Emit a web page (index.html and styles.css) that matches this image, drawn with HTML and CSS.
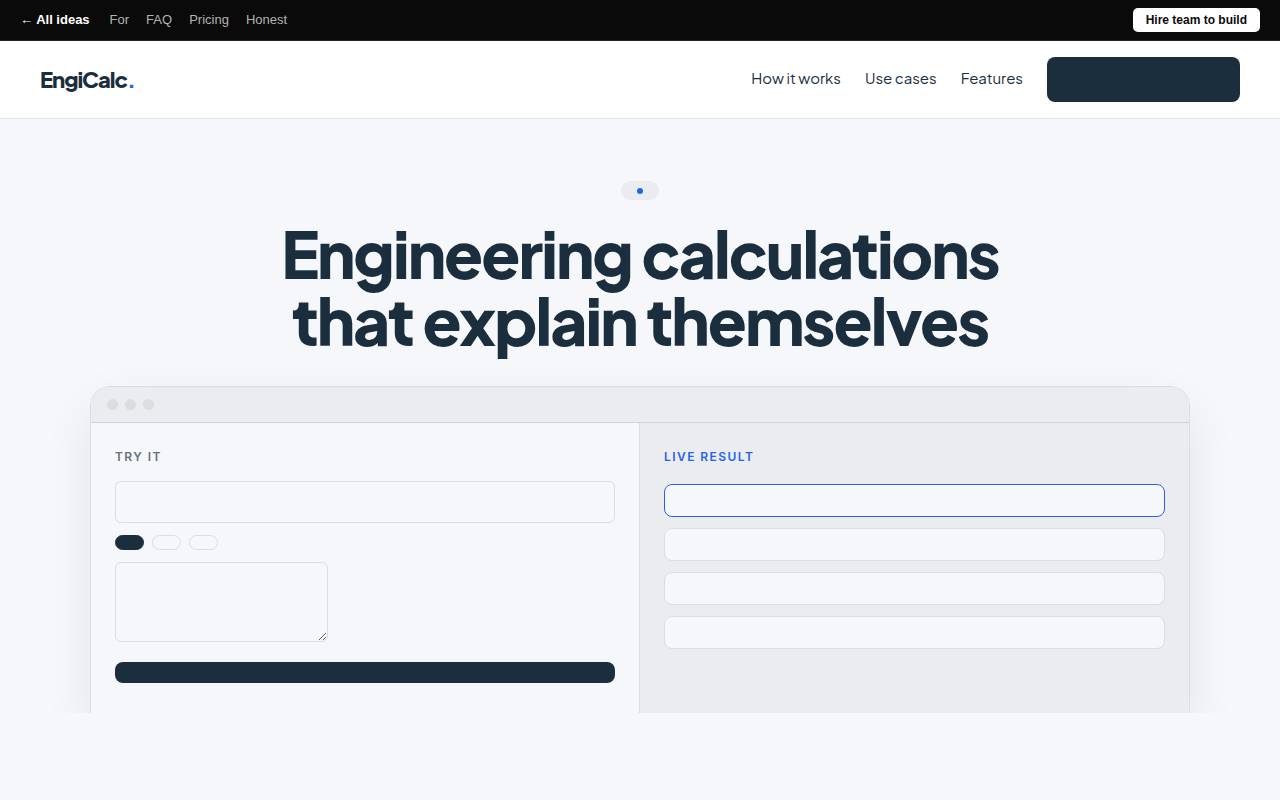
FILE: index.html
```html
<!DOCTYPE html>
<html lang="en">
<head>
  <meta charset="UTF-8">
  <meta name="viewport" content="width=device-width, initial-scale=1.0">
  <title>EngiCalc</title>
  <link rel="stylesheet" href="styles.css">
</head>
<body>
  <!-- Ideas bar -->
  <div class="topbar">
    <nav class="topbar-links">
      <a href="#ideas" class="topbar-back">← All ideas</a>
      <a href="#for">For</a>
      <a href="#faq">FAQ</a>
      <a href="#pricing">Pricing</a>
      <a href="#honest">Honest</a>
    </nav>
    <a href="#hire" class="topbar-cta">Hire team to build</a>
  </div>

  <!-- Site header -->
  <header class="header">
    <a href="#" class="logo">EngiCalc<span class="logo-dot">.</span></a>
    <nav class="nav">
      <a href="#how">How it works</a>
      <a href="#use-cases">Use cases</a>
      <a href="#features">Features</a>
      <button class="nav-button" type="button" aria-label="Get started"></button>
    </nav>
  </header>

  <main class="hero">
    <div class="badge"><span class="badge-dot"></span></div>
    <h1>Engineering calculations<br>that explain themselves</h1>

    <!-- Product preview -->
    <div class="window">
      <div class="window-bar">
        <span class="window-dot"></span>
        <span class="window-dot"></span>
        <span class="window-dot"></span>
      </div>
      <div class="window-body">
        <form class="pane">
          <label class="pane-title" for="problem">TRY IT</label>
          <input class="field" type="text" id="problem">
          <div class="chips">
            <button class="chip chip-active" type="button" aria-label="First example"></button>
            <button class="chip" type="button" aria-label="Second example"></button>
            <button class="chip" type="button" aria-label="Third example"></button>
          </div>
          <textarea class="notes" aria-label="Notes"></textarea>
          <button class="run-button" type="button" aria-label="Calculate"></button>
        </form>
        <div class="pane pane-result">
          <h2 class="pane-title pane-title-live">LIVE RESULT</h2>
          <div class="results">
            <div class="result result-active"></div>
            <div class="result"></div>
            <div class="result"></div>
            <div class="result"></div>
          </div>
        </div>
      </div>
    </div>
  </main>
</body>
</html>
```
FILE: styles.css
```css
* {
  box-sizing: border-box;
}

body {
  margin: 0;
  font-family: "Plus Jakarta Sans", Inter, sans-serif;
  background-color: #f6f7fb;
  color: #1b2e3d;
}

a {
  color: inherit;
  text-decoration: none;
}

button {
  border: none;
  padding: 0;
  cursor: pointer;
}

/* Ideas bar */
.topbar {
  display: flex;
  justify-content: space-between;
  align-items: center;
  padding: 8px 20px;
  background-color: #0a0a0a;
  border-bottom: 1px solid #222222;
  font-family: "Liberation Sans", Arial, sans-serif;
  font-size: 13px;
  line-height: 16px;
}

.topbar-links {
  display: flex;
  gap: 17px;
  color: #b3b3b3;
}

.topbar-back {
  margin-right: 3px;
  color: #ffffff;
  font-weight: bold;
}

.topbar-cta {
  padding: 4px 13px;
  border-radius: 5px;
  background-color: #ffffff;
  color: #0a0a0a;
  font-size: 12px;
  font-weight: bold;
}

/* Header */
.header {
  display: flex;
  justify-content: space-between;
  align-items: center;
  padding: 16px 40px;
  background-color: #ffffff;
  border-bottom: 1px solid #e2e4e6;
}

.logo {
  padding-bottom: 2px;
  font-size: 22px;
  font-weight: 800;
  letter-spacing: -1px;
}

.logo-dot {
  color: #2563eb;
}

.nav {
  display: flex;
  align-items: center;
  gap: 24px;
  font-size: 15px;
}

.nav a {
  padding-bottom: 4px;
}

.nav-button {
  width: 193px;
  height: 45px;
  border-radius: 8px;
  background-color: #1b2e3d;
}

/* Hero */
.hero {
  display: flex;
  flex-direction: column;
  align-items: center;
  padding: 62px 40px 0;
  overflow: hidden;
}

.badge {
  display: flex;
  padding: 7px 16px 6px;
  border-radius: 10px;
  background-color: #ebecf0;
}

.badge-dot {
  width: 6px;
  height: 6px;
  border-radius: 50%;
  background-color: #2563eb;
}

h1 {
  margin: 20px 0 32px;
  font-size: 64px;
  font-weight: 800;
  line-height: 67px;
  letter-spacing: -0.03em;
  text-align: center;
}

/* Product preview */
.window {
  width: 100%;
  max-width: 1100px;
  border: 1px solid #dcdde1;
  border-bottom: none;
  border-radius: 20px 20px 0 0;
  box-shadow: 0 20px 50px rgba(0, 0, 0, 0.08);
  overflow: hidden;
}

.window-bar {
  display: flex;
  gap: 7px;
  padding: 12px 16px;
  background-color: #ebecf0;
  border-bottom: 1px solid #d2d3d8;
}

.window-dot {
  width: 11px;
  height: 11px;
  border-radius: 50%;
  background-color: #dddddd;
}

.window-body {
  display: grid;
  grid-template-columns: 1fr 1fr;
}

.pane {
  display: flex;
  flex-direction: column;
  padding: 24px 24px 30px;
  background-color: #f6f7fb;
  border-right: 1px solid #dcdde1;
}

.pane-result {
  border-right: none;
  background-color: #ebecf0;
}

.pane-title {
  margin: 0 0 14px;
  font-family: Inter, sans-serif;
  font-size: 12px;
  font-weight: 600;
  line-height: 20px;
  letter-spacing: 0.12em;
  color: #66707c;
}

.pane-title-live {
  margin-bottom: 17px;
  color: #2563eb;
}

.field,
.notes {
  border: 1px solid #dcdde1;
  border-radius: 6px;
  background-color: #f6f7fb;
  color: inherit;
  font: inherit;
}

.field {
  width: 100%;
  height: 42px;
  padding: 0 12px;
}

.chips {
  display: flex;
  gap: 8px;
  margin: 12px 0;
}

.chip {
  width: 29px;
  height: 15px;
  border: 1px solid #dcdde1;
  border-radius: 8px;
  background-color: #f6f7fb;
}

.chip-active {
  border-color: #1b2e3d;
  background-color: #1b2e3d;
}

.notes {
  width: 213px;
  height: 80px;
  padding: 12px;
  resize: both;
}

.run-button {
  height: 21px;
  margin-top: 20px;
  border-radius: 8px;
  background-color: #1b2e3d;
}

.results {
  display: flex;
  flex-direction: column;
  gap: 11px;
}

.result {
  height: 33px;
  border: 1px solid #dcdde1;
  border-radius: 8px;
  background-color: #f6f7fb;
}

.result-active {
  border-color: #2563eb;
}
```
